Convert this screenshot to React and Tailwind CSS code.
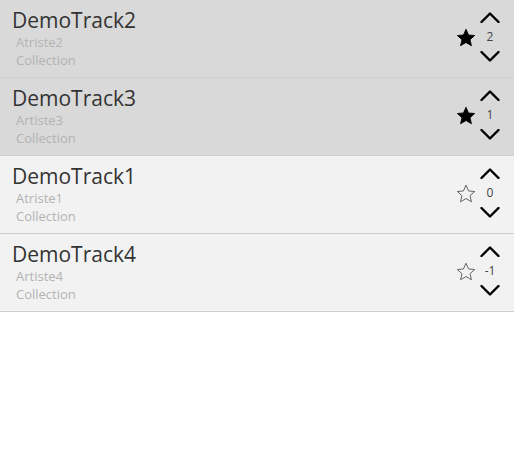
import { useState } from 'react';

const TRACKS = [
  { id: 2, title: 'DemoTrack2', artist: 'Atriste2', album: 'Collection', votes: 2, fav: true },
  { id: 3, title: 'DemoTrack3', artist: 'Artiste3', album: 'Collection', votes: 1, fav: true },
  { id: 1, title: 'DemoTrack1', artist: 'Atriste1', album: 'Collection', votes: 0, fav: false },
  { id: 4, title: 'DemoTrack4', artist: 'Artiste4', album: 'Collection', votes: -1, fav: false },
];

const Star = ({ filled }) => (
  <svg width="20" height="19" viewBox="0 0 24 23">
    <path
      d="M12 1.5l3.1 6.9 7.4.7-5.6 5 1.7 7.4L12 17.6l-6.6 3.9 1.7-7.4-5.6-5 7.4-.7z"
      fill={filled ? '#000' : 'none'}
      stroke={filled ? '#000' : '#555'}
      strokeWidth={filled ? 1 : 1.1}
      strokeLinejoin="round"
    />
  </svg>
);

const Chevron = ({ up }) => (
  <svg width="20" height="11" viewBox="0 0 20 11">
    <path
      d={up ? 'M1.5 10 L10 1.5 L18.5 10' : 'M1.5 1 L10 9.5 L18.5 1'}
      fill="none"
      stroke="#000"
      strokeWidth="2.4"
      strokeLinecap="round"
      strokeLinejoin="round"
    />
  </svg>
);

const TrackRow = ({ track }) => (
  <div
    className={
      'flex h-[78px] items-start justify-between border-b border-[#cfcfcf] ' +
      (track.fav ? 'bg-[#d9d9d9]' : 'bg-[#f2f2f2]')
    }
  >
    <div className="flex flex-col pl-3 pt-[7px]">
      <span className="text-[21px] leading-[26px] text-[#333]">{track.title}</span>
      <span className="pl-1 text-[13px] leading-[18px] text-[#b3b3b3]">{track.artist}</span>
      <span className="pl-1 text-[13px] leading-[18px] text-[#b3b3b3]">{track.album}</span>
    </div>
    <div className="flex items-center gap-[4px] pr-[14px] pt-[12px]">
      <Star filled={track.fav} />
      <div className="flex w-[20px] flex-col items-center">
        <Chevron up />
        <span className="my-[6px] text-[12px] leading-[16px] text-[#444]">{track.votes}</span>
        <Chevron />
      </div>
    </div>
  </div>
);

const App = () => {
  const [tracks] = useState(TRACKS);

  return (
    <div className="min-h-[474px] w-full bg-white font-['Open_Sans',sans-serif]">
      {tracks.map((t) => (
        <TrackRow key={t.id} track={t} />
      ))}
    </div>
  );
};

export default App;
